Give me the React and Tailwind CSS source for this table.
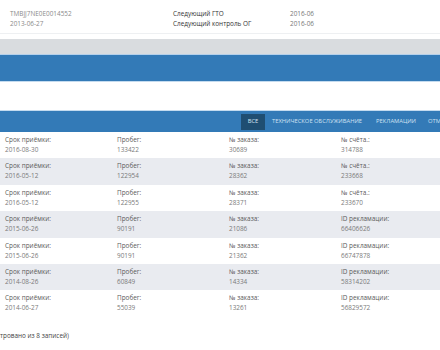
const rows = [
  ["2016-08-30", "133422", "30689", "№ счёта.:", "314788"],
  ["2016-05-12", "122954", "28362", "№ счёта.:", "233668"],
  ["2016-05-12", "122955", "28371", "№ счёта.:", "233670"],
  ["2015-06-26", "90191", "21086", "ID рекламации:", "66406626"],
  ["2015-06-26", "90191", "21362", "ID рекламации:", "66747878"],
  ["2014-08-26", "60849", "14334", "ID рекламации:", "58314202"],
  ["2014-06-27", "55039", "13261", "ID рекламации:", "56829572"],
];

const Cell = ({ label, value }) => (
  <div className="w-[112px] shrink-0 pl-[5px] leading-[10px]">
    <div className="text-[#5a5a5a]">{label}</div>
    <div className="text-[#7a7a7a]">{value}</div>
  </div>
);

const App = () => {
  return (
    <div
      className="w-[440px] h-[350px] overflow-hidden bg-white text-[6.4px]"
      style={{ fontFamily: '"Open Sans", "Noto Sans", sans-serif' }}
    >
      {/* vehicle info */}
      <div className="h-[34px] flex pt-[9px] leading-[9.5px] border-b border-[#eef0f2]">
        <div className="w-[173px] shrink-0 pl-[10px] text-[#8a8a8a]">
          <div>TMBJJ7NE0E0014552</div>
          <div>2013-06-27</div>
        </div>
        <div className="w-[117px] shrink-0 text-[#333]">
          <div>Следующий ГТО</div>
          <div>Следующий контроль ОГ</div>
        </div>
        <div className="text-[#777]">
          <div>2016-06</div>
          <div>2016-06</div>
        </div>
      </div>
      <div className="h-[5px]" />
      <div className="h-[15px] bg-[#d9dcdf]" />
      <div className="h-px bg-[#b5d0ea]" />
      <div className="h-[26px] bg-[#337ab7]" />
      <div className="h-px bg-[#c4dbef]" />
      <div className="h-[28px]" />
      <div className="h-px bg-[#c4dbef]" />

      {/* tabs */}
      <div className="h-[21px] bg-[#337ab7] flex items-center text-[5.8px] uppercase text-[#cfe1f2] whitespace-nowrap overflow-hidden">
        <div className="ml-[241px] w-[24px] h-[16px] shrink-0 bg-[#1f4e72] flex items-center justify-center text-[#d4e3f0]">
          Все
        </div>
        <div className="ml-[7px] shrink-0">Техническое обслуживание</div>
        <div className="ml-[14px] shrink-0">Рекламации</div>
        <div className="ml-[12px] shrink-0">Отм</div>
      </div>

      {/* list */}
      <div>
        {rows.map((r, i) => (
          <div
            key={i}
            className={`h-[26.4px] pt-[3px] flex whitespace-nowrap ${
              i % 2 === 1 ? "bg-[#e9ebf0]" : "bg-white"
            }`}
          >
            <Cell label="Срок приёмки:" value={r[0]} />
            <Cell label="Пробег:" value={r[1]} />
            <Cell label="№ заказа:" value={r[2]} />
            <Cell label={r[3]} value={r[4]} />
          </div>
        ))}
      </div>

      <div className="mt-[14px] text-[#444] whitespace-nowrap">
        тровано из 8 записей)
      </div>
    </div>
  );
};

export default App;
